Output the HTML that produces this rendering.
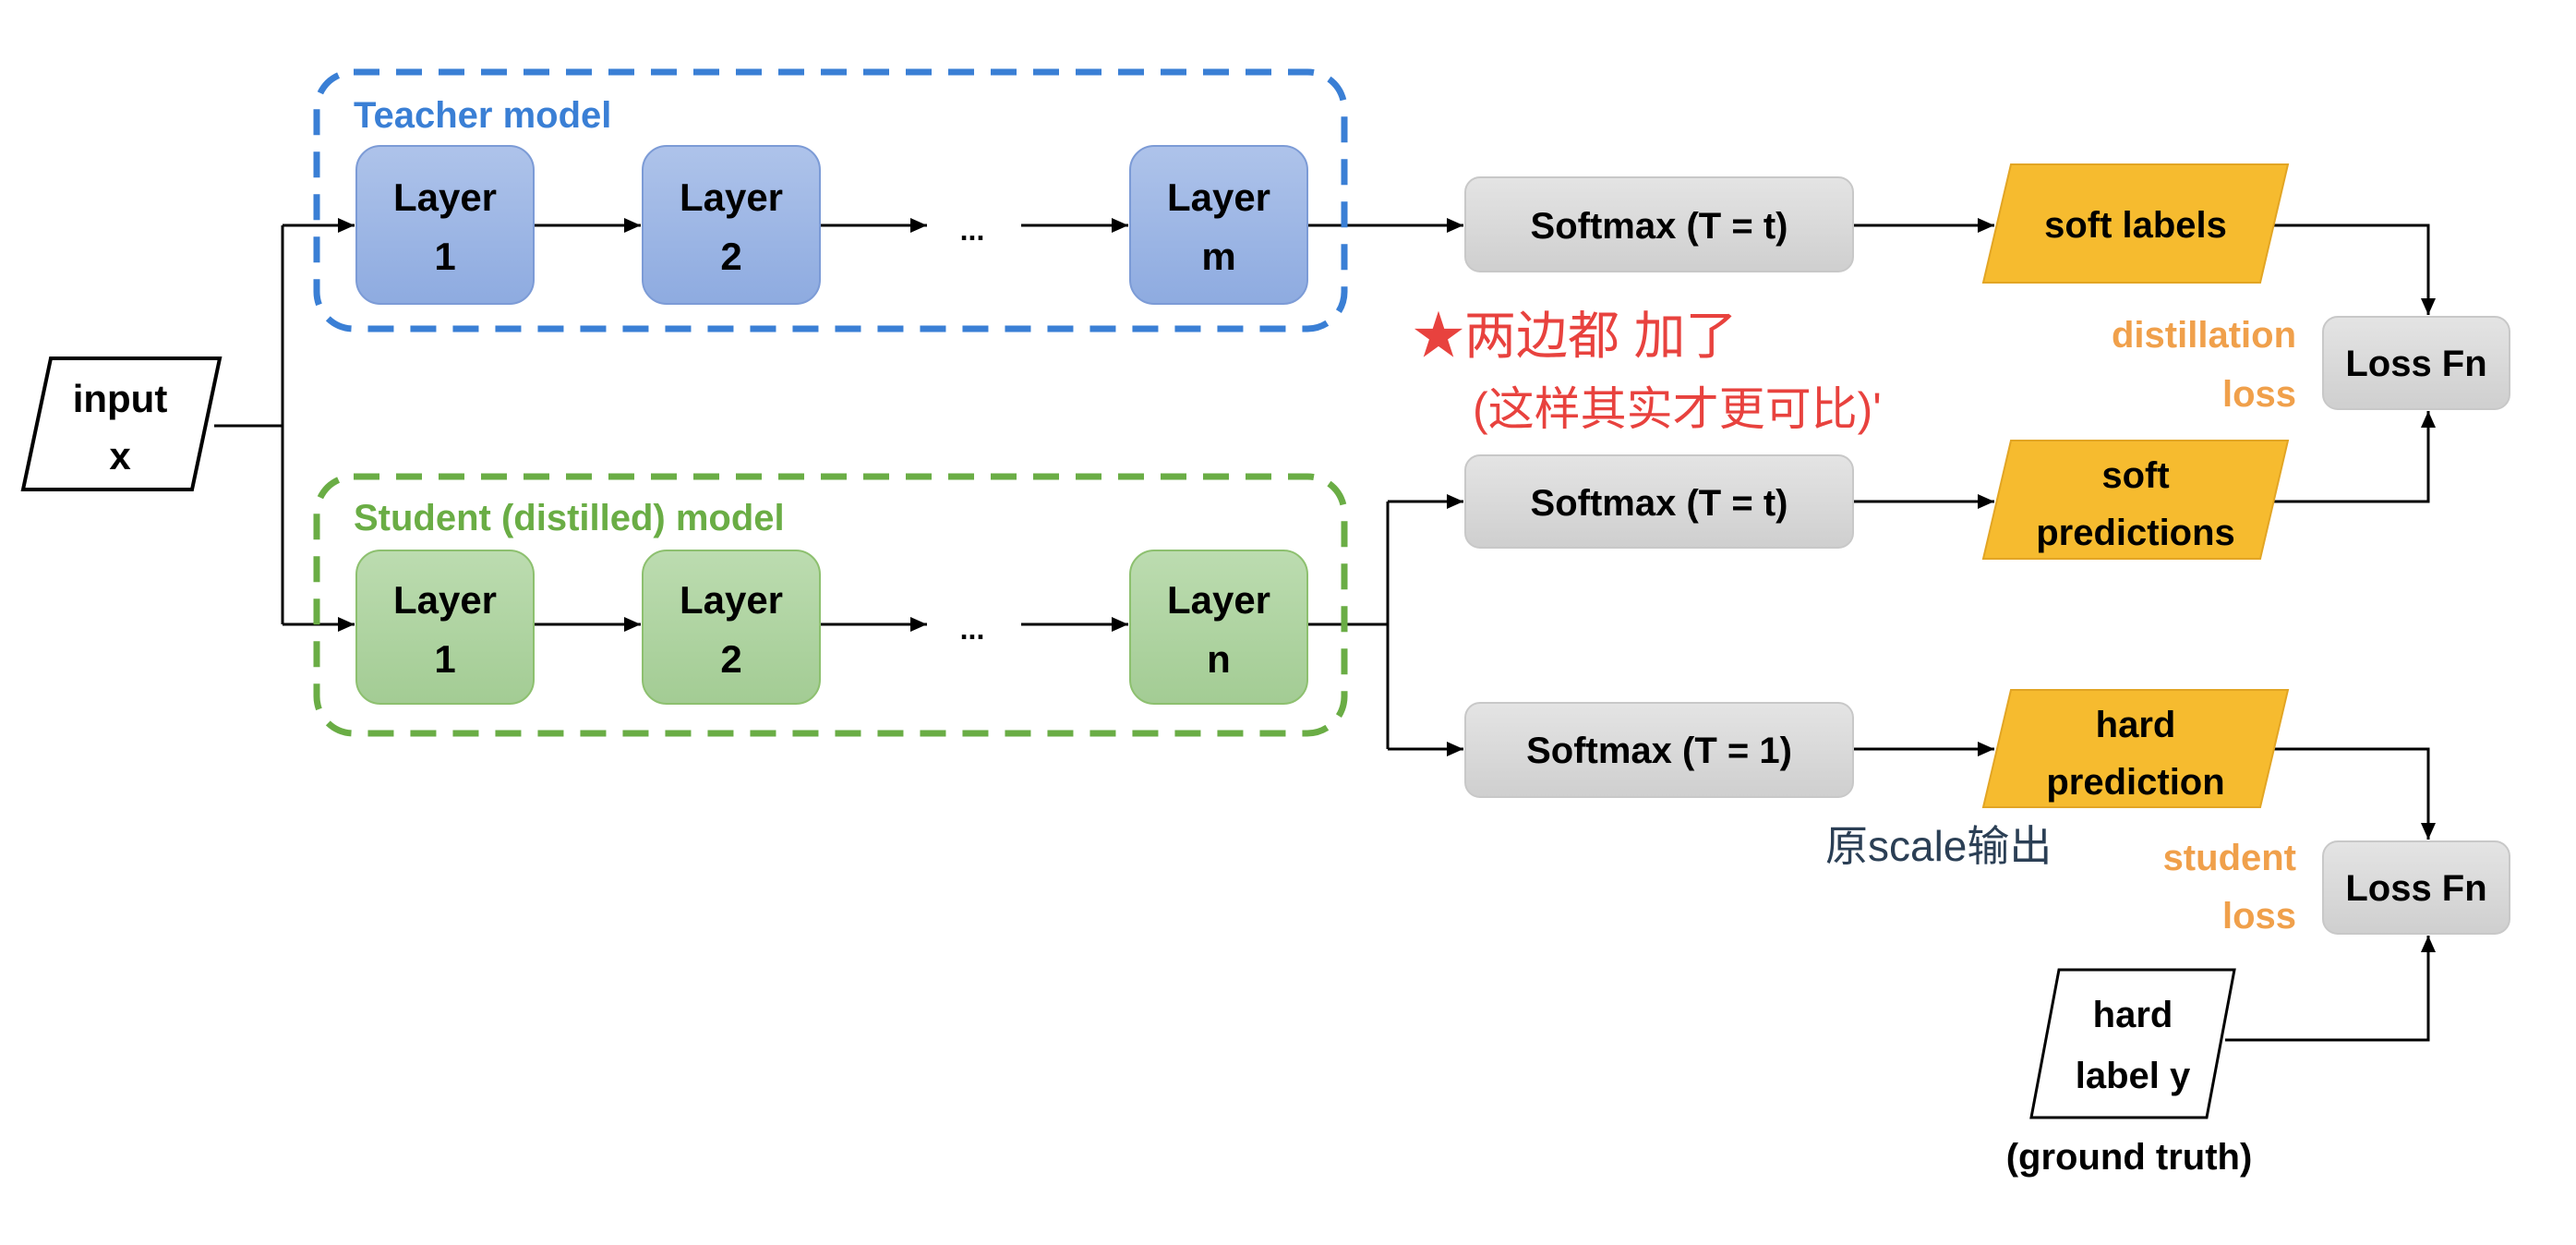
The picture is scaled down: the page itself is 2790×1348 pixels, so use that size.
<!DOCTYPE html>
<html><head><meta charset="utf-8"><style>
html,body{margin:0;padding:0;background:#fff;width:2790px;height:1348px;overflow:hidden}
text{font-family:"Liberation Sans","Noto Sans CJK SC",sans-serif;font-weight:bold}
.hw{font-family:"WenQuanYi Zen Hei",sans-serif;font-weight:normal}
</style></head><body>
<svg width="2790" height="1348" viewBox="0 0 2790 1348" xmlns="http://www.w3.org/2000/svg">
<defs>
<marker id="a" markerWidth="20" markerHeight="20" refX="18" refY="10" orient="auto" markerUnits="userSpaceOnUse"><path d="M0,2 L18,10 L0,18z" fill="#000"/></marker>
<linearGradient id="bl" x1="0" y1="0" x2="0" y2="1"><stop offset="0" stop-color="#aec3ea"/><stop offset="1" stop-color="#8eabe0"/></linearGradient>
<linearGradient id="gr" x1="0" y1="0" x2="0" y2="1"><stop offset="0" stop-color="#bcdcb0"/><stop offset="1" stop-color="#a3cc94"/></linearGradient>
<linearGradient id="gy" x1="0" y1="0" x2="0" y2="1"><stop offset="0" stop-color="#e4e4e4"/><stop offset="1" stop-color="#cfcfcf"/></linearGradient>
</defs>
<g stroke="#000" stroke-width="3" fill="none">
<path d="M232,461 H306 M306,244 V676"/>
<path d="M306,244 H384" marker-end="url(#a)"/>
<path d="M306,676 H384" marker-end="url(#a)"/>
<path d="M578,244 H694" marker-end="url(#a)"/>
<path d="M888,244 H1004" marker-end="url(#a)"/>
<path d="M1106,244 H1222" marker-end="url(#a)"/>
<path d="M578,676 H694" marker-end="url(#a)"/>
<path d="M888,676 H1004" marker-end="url(#a)"/>
<path d="M1106,676 H1222" marker-end="url(#a)"/>
<path d="M1416,244 H1585" marker-end="url(#a)"/>
<path d="M1416,676 H1503 M1503,543 V811"/>
<path d="M1503,543 H1585" marker-end="url(#a)"/>
<path d="M1503,811 H1585" marker-end="url(#a)"/>
<path d="M2007,244 H2160" marker-end="url(#a)"/>
<path d="M2007,543 H2160" marker-end="url(#a)"/>
<path d="M2007,811 H2160" marker-end="url(#a)"/>
<path d="M2462,244 H2630 V341" marker-end="url(#a)"/>
<path d="M2462,543 H2630 V445" marker-end="url(#a)"/>
<path d="M2462,811 H2630 V909" marker-end="url(#a)"/>
<path d="M2410,1126 H2630 V1013" marker-end="url(#a)"/>
</g>
<rect x="343" y="78" width="1113" height="278" rx="40" fill="none" stroke="#3a7fd5" stroke-width="7" stroke-dasharray="28,18"/>
<rect x="343" y="516" width="1113" height="278" rx="40" fill="none" stroke="#6aad45" stroke-width="7" stroke-dasharray="28,18"/>
<text x="383" y="138" font-size="40" fill="#3a7fd5">Teacher model</text>
<text x="383" y="574" font-size="40" fill="#6aad45">Student (distilled) model</text>
<g font-size="42" text-anchor="middle" fill="#000">
<rect x="386" y="158" width="192" height="171" rx="26" fill="url(#bl)" stroke="#7c9bd6" stroke-width="2"/>
<text x="482" y="228">Layer</text><text x="482" y="292">1</text>
<rect x="696" y="158" width="192" height="171" rx="26" fill="url(#bl)" stroke="#7c9bd6" stroke-width="2"/>
<text x="792" y="228">Layer</text><text x="792" y="292">2</text>
<rect x="1224" y="158" width="192" height="171" rx="26" fill="url(#bl)" stroke="#7c9bd6" stroke-width="2"/>
<text x="1320" y="228">Layer</text><text x="1320" y="292">m</text>
<rect x="386" y="596" width="192" height="166" rx="26" fill="url(#gr)" stroke="#8dc06f" stroke-width="2"/>
<text x="482" y="664">Layer</text><text x="482" y="728">1</text>
<rect x="696" y="596" width="192" height="166" rx="26" fill="url(#gr)" stroke="#8dc06f" stroke-width="2"/>
<text x="792" y="664">Layer</text><text x="792" y="728">2</text>
<rect x="1224" y="596" width="192" height="166" rx="26" fill="url(#gr)" stroke="#8dc06f" stroke-width="2"/>
<text x="1320" y="664">Layer</text><text x="1320" y="728">n</text>
<text x="1053" y="260" font-size="32">...</text>
<text x="1053" y="692" font-size="32">...</text>
<polygon points="55,388 238,388 208,530 25,530" fill="#fff" stroke="#000" stroke-width="4"/>
<text x="130" y="446">input</text><text x="130" y="508">x</text>
<rect x="1587" y="192" width="420" height="102" rx="16" fill="url(#gy)" stroke="#c8c8c8" stroke-width="2"/>
<text x="1797" y="258" font-size="40">Softmax (T = t)</text>
<rect x="1587" y="493" width="420" height="100" rx="16" fill="url(#gy)" stroke="#c8c8c8" stroke-width="2"/>
<text x="1797" y="558" font-size="40">Softmax (T = t)</text>
<rect x="1587" y="761" width="420" height="102" rx="16" fill="url(#gy)" stroke="#c8c8c8" stroke-width="2"/>
<text x="1797" y="826" font-size="40">Softmax (T = 1)</text>
<polygon points="2178,178 2478,178 2448,306 2148,306" fill="#f6bb2f" stroke="#e2a524" stroke-width="2"/>
<text x="2313" y="257" font-size="40">soft labels</text>
<polygon points="2178,477 2478,477 2448,605 2148,605" fill="#f6bb2f" stroke="#e2a524" stroke-width="2"/>
<text x="2313" y="528" font-size="40">soft</text><text x="2313" y="590" font-size="40">predictions</text>
<polygon points="2178,747 2478,747 2448,874 2148,874" fill="#f6bb2f" stroke="#e2a524" stroke-width="2"/>
<text x="2313" y="798" font-size="40">hard</text><text x="2313" y="860" font-size="40">prediction</text>
<rect x="2516" y="343" width="202" height="100" rx="16" fill="url(#gy)" stroke="#c8c8c8" stroke-width="2"/>
<text x="2617" y="407" font-size="40">Loss Fn</text>
<rect x="2516" y="911" width="202" height="100" rx="16" fill="url(#gy)" stroke="#c8c8c8" stroke-width="2"/>
<text x="2617" y="975" font-size="40">Loss Fn</text>
<polygon points="2230,1050 2420,1050 2390,1210 2200,1210" fill="#fff" stroke="#000" stroke-width="3"/>
<text x="2310" y="1112" font-size="40">hard</text><text x="2310" y="1178" font-size="40">label y</text>
<text x="2306" y="1266" font-size="40">(ground truth)</text>
</g>
<g font-size="40" fill="#f0a04b" text-anchor="end">
<text x="2487" y="376">distillation</text><text x="2487" y="440">loss</text>
<text x="2487" y="942">student</text><text x="2487" y="1005">loss</text>
</g>
<text class="hw" x="1530" y="383" font-size="56" fill="#e8423e">★两边都 加了</text>
<text class="hw" x="1595" y="460" font-size="50" fill="#e8423e">(这样其实才更可比)'</text>
<text class="hw" x="1977" y="932" font-size="46" fill="#2b3f55">原scale输出</text>
</svg>
</body></html>
